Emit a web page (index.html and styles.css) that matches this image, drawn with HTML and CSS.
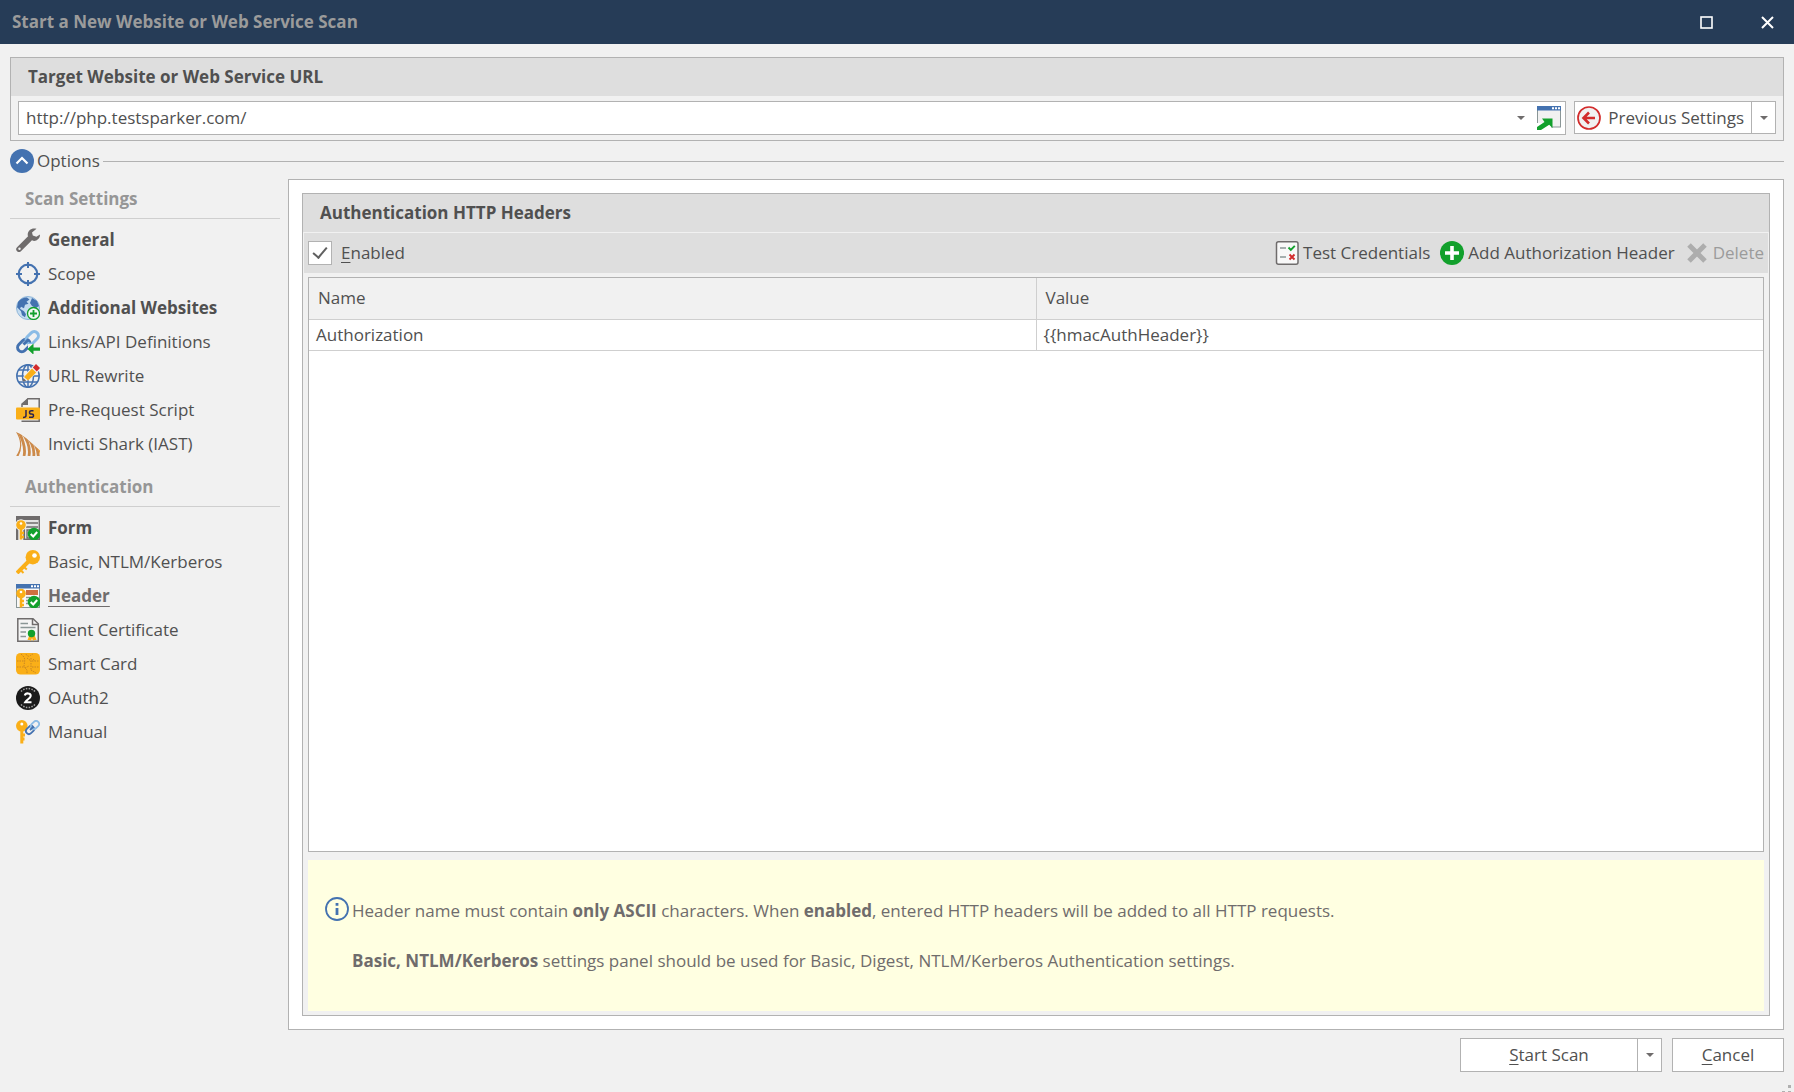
FILE: index.html
```html
<!DOCTYPE html>
<html lang="en">
<head>
    <meta charset="UTF-8">
    <title>Start a New Website or Web Service Scan</title>
    <link rel="stylesheet" href="styles.css">
</head>
<body>
    <header class="titlebar">
        <h1 class="titlebar-title">Start a New Website or Web Service Scan</h1>
        <div class="window-buttons">
            <button class="window-button" aria-label="Maximize">
                <svg width="13" height="13" viewBox="0 0 13 13"><rect x="1" y="1" width="11" height="11" fill="none" stroke="#fff" stroke-width="1.6"/></svg>
            </button>
            <button class="window-button close" aria-label="Close">
                <svg width="13" height="13" viewBox="0 0 13 13"><path d="M1 1l11 11M12 1L1 12" stroke="#fff" stroke-width="2"/></svg>
            </button>
        </div>
    </header>

    <main class="content">
        <section class="target">
            <h2 class="group-title"><label for="targetUrl">Target Website or Web Service URL</label></h2>
            <div class="target-row">
                <div class="url-box">
                    <input type="text" id="targetUrl" class="url-input" value="http://php.testsparker.com/">
                    <button class="arrow-button" aria-label="Recent URLs"><span class="arrow"></span></button>
                    <button class="open-button" aria-label="Open in browser">
                        <svg class="icon" viewBox="0 0 24 24">
                            <rect x=".5" y="1" width="23" height="20" fill="#f1f1f1" stroke="#8a9696"/>
                            <path d="M0 0h24v4.500H0z" fill="#4472b0"/>
                            <path d="M15 1.300h2v2h-2zM18 1.300h2v2h-2zM21 1.300h2v2h-2z" fill="#fff"/>
                            <path d="M0 17h14v7H0z" fill="#fff"/>
                            <path d="M5 12.500h10.500V22l-3.300-3.200L4 24H0v-3l7.500-5z" fill="#12a02c"/>
                        </svg>
                    </button>
                </div>
                <div class="split-button">
                    <button class="split-main previous">
                        <svg class="icon" viewBox="0 0 24 24">
                            <circle cx="12" cy="12" r="11" fill="#f1f1f1" stroke="#d22b2b" stroke-width="1.700"/>
                            <path d="M18 12H7M12 6.500L6.500 12l5.500 5.500" fill="none" stroke="#d22b2b" stroke-width="2.600"/>
                        </svg>
                        Previous Settings
                    </button>
                    <button class="split-arrow" aria-label="More previous settings"><span class="arrow"></span></button>
                </div>
            </div>
        </section>

        <div class="options">
            <button class="options-toggle">
                <svg class="icon" viewBox="0 0 24 24">
                    <circle cx="12" cy="12" r="12" fill="#4472b0"/>
                    <path d="M6.500 14.500L12 9l5.500 5.500" fill="none" stroke="#fff" stroke-width="2.200"/>
                </svg>
                Options
            </button>
            <span class="options-line"></span>
        </div>

        <div class="workspace">
            <nav class="sidebar">
                <h2 class="sidebar-title">Scan Settings</h2>
                <ul class="menu">
                    <li><a href="#general" class="menu-item changed">
                        <svg class="icon" viewBox="0 0 24 24">
                            <path d="M3 21.200L14 10.200" stroke="#6f6c6c" stroke-width="5.500" stroke-linecap="round"/>
                            <path d="M20.500.8C15.500-.8 11 3 11.800 7.800l5 5C20.500 13.500 24 11 24 6.600l-3.600 2.200-3.600-1.200-.8-3.200z" fill="#6f6c6c"/>
                            <circle cx="3.500" cy="20.700" r="1.200" fill="#f1f1f1"/>
                        </svg>
                        General</a></li>
                    <li><a href="#scope" class="menu-item">
                        <svg class="icon" viewBox="0 0 24 24">
                            <circle cx="12" cy="12" r="9.300" fill="none" stroke="#4472b0" stroke-width="2.200"/>
                            <path d="M12 0v6M12 18v6M0 12h6M18 12h6" stroke="#4472b0" stroke-width="2"/>
                        </svg>
                        Scope</a></li>
                    <li><a href="#websites" class="menu-item changed">
                        <svg class="icon" viewBox="0 0 24 24">
                            <circle cx="12" cy="12" r="11.500" fill="#c5dcf0" stroke="#8fb6da"/>
                            <path d="M2 6c2-3 6-4.800 9-4.600l2.500 2-3 2.300 2 2-3.500 1-1 3.500-3-1.500-1 2 4 2.500 2 3-1 3-3-2-1-4-4-4zM16 2l5 3 2 5-3 2-4-2-2-3z" fill="#4472b0"/>
                            <circle cx="17.500" cy="17.500" r="6" fill="#f4f8f4" stroke="#12a02c" stroke-width="1.300"/>
                            <path d="M17.500 14v7M14 17.500h7" stroke="#12a02c" stroke-width="1.800"/>
                        </svg>
                        Additional Websites</a></li>
                    <li><a href="#links" class="menu-item">
                        <svg class="icon" viewBox="0 0 24 24">
                            <rect x="-7" y="-4.200" width="14" height="8.400" rx="4.200" transform="translate(7.800 15.500) rotate(-45)" fill="none" stroke="#4472b0" stroke-width="3"/>
                            <rect x="-7" y="-4.200" width="14" height="8.400" rx="4.200" transform="translate(16.200 7.800) rotate(-45)" fill="none" stroke="#8bbce6" stroke-width="3"/>
                            <path d="M7.500 14.500l5-5" stroke="#4472b0" stroke-width="3"/>
                            <path d="M12 14h12v10H12z" fill="#f1f1f1"/>
                            <path d="M11.500 19l6-5.500v4H24v3.200h-6.500v4z" fill="#12a02c"/>
                        </svg>
                        Links/API Definitions</a></li>
                    <li><a href="#rewrite" class="menu-item">
                        <svg class="icon" viewBox="0 0 24 24">
                            <g fill="none" stroke="#4472b0" stroke-width="1.500">
                                <circle cx="12" cy="12" r="11.200"/>
                                <ellipse cx="12" cy="12" rx="5.500" ry="11.200"/>
                                <path d="M12 1v22M1 12h22M3 6h18M3 18h18"/>
                            </g>
                            <path d="M6.500 17.500l1.500-6L18 1l6 5-11 10z" fill="#f1f1f1"/>
                            <path d="M8 13l8-8.500 4.200 4L12 16.500z" fill="#faaf18"/>
                            <path d="M16.800 3.500L20 0l4 4-3.200 3.500z" fill="#d22b2b"/>
                            <path d="M7.300 14l3 2.800L6.500 17.500z" fill="#6f6c6c"/>
                        </svg>
                        URL Rewrite</a></li>
                    <li><a href="#script" class="menu-item">
                        <svg class="icon" viewBox="0 0 24 24">
                            <path d="M6 9V6l6-5.200h11.200V23.300H5.500" fill="#f1f1f1" stroke="#6f6c6c" stroke-width="1.500"/>
                            <path d="M5.500 7L12 0v7z" fill="#6f6c6c"/>
                            <rect y="9.500" width="24" height="12" rx="1" fill="#faaf18"/>
                            <path d="M10 12v5.500q0 2-3 2M17.500 12.800h-2q-2 0-2 1.600t2 1.600 2 1.700-2 1.600h-2.500" fill="none" stroke="#2b2350" stroke-width="1.500"/>
                        </svg>
                        Pre-Request Script</a></li>
                    <li><a href="#shark" class="menu-item">
                        <svg class="icon" viewBox="0 0 24 24">
                            <clipPath id="fin"><path d="M0 0C8 3 13 9 24 18.500V24H0C6 16 5 8 0 0z"/></clipPath>
                            <g clip-path="url(#fin)" fill="none" stroke="#cc8a4a" stroke-width="2.800">
                                <path d="M0 0C4 7 6 15 1 24"/>
                                <path d="M3 0c4 8 7 16 5 24"/>
                                <path d="M6.500 1c5 7 8 15 6.500 23"/>
                                <path d="M9.500 3c6 6 9 13 8.300 21"/>
                                <path d="M14 6c5 5 8 11 8.300 18"/>
                                <path d="M19 11c4 4 6 9 7 13" stroke="#f2a23a"/>
                            </g>
                        </svg>
                        Invicti Shark (IAST)</a></li>
                </ul>

                <h2 class="sidebar-title">Authentication</h2>
                <ul class="menu">
                    <li><a href="#form" class="menu-item changed">
                        <svg class="icon" viewBox="0 0 24 24">
                            <rect x=".7" y=".7" width="22.600" height="22.600" fill="#e4e4e4" stroke="#6f6c6c" stroke-width="1.400"/>
                            <path d="M0 0h24v4H0zM0 12h9v12H0z" fill="#6f6c6c"/>
                            <path d="M10 7h12M10 11h12M11 14h5v8h-5z" stroke="#6f6c6c" stroke-width="1.300" fill="none"/>
                            <path d="M4.800 12V24" stroke="#f1f1f1" stroke-width="5"/>
                            <circle cx="5" cy="9" r="5.700" fill="#f1f1f1"/>
                            <circle cx="5" cy="9" r="4.800" fill="#faaf18"/>
                            <circle cx="5" cy="7.500" r="1.300" fill="#fff"/>
                            <path d="M5 12v11.500M5 17h3M5 21h3" stroke="#faaf18" stroke-width="2.500"/>
                            <circle cx="18" cy="18" r="6.300" fill="#12a02c"/>
                            <path d="M14.700 18l2.500 2.500 4-4.500" stroke="#fff" stroke-width="2" fill="none"/>
                        </svg>
                        Form</a></li>
                    <li><a href="#basic" class="menu-item">
                        <svg class="icon" viewBox="0 0 24 24">
                            <circle cx="16.800" cy="7.200" r="7.200" fill="#faaf18"/>
                            <path d="M12.500 11.500L1 23" stroke="#faaf18" stroke-width="4"/>
                            <path d="M3.500 19l4 4M6.800 16l4 3.500" stroke="#faaf18" stroke-width="2"/>
                            <circle cx="18.500" cy="5.500" r="2.300" fill="#fff"/>
                        </svg>
                        Basic, NTLM/Kerberos</a></li>
                    <li><a href="#header" class="menu-item selected" aria-current="page">
                        <svg class="icon" viewBox="0 0 24 24">
                            <rect x=".5" y=".5" width="23" height="23" fill="#f8f8f8" stroke="#8a9696"/>
                            <path d="M0 0h24v4.500H0z" fill="#4472b0"/>
                            <path d="M15 1.300h2v2h-2zM18 1.300h2v2h-2zM21 1.300h2v2h-2z" fill="#fff"/>
                            <path d="M10 6h12v5H10z" fill="#cf7040"/>
                            <path d="M10 13.500h4M10 16.500h3M10 19.500h3" stroke="#8a9696" stroke-width="1.400"/>
                            <circle cx="5" cy="9.500" r="4.800" fill="#faaf18"/>
                            <circle cx="5" cy="8" r="1.300" fill="#fff"/>
                            <path d="M5 12v11.500M5 17h3M5 21h3" stroke="#faaf18" stroke-width="2.500"/>
                            <circle cx="18" cy="18" r="6.300" fill="#12a02c"/>
                            <path d="M14.700 18l2.500 2.500 4-4.500" stroke="#fff" stroke-width="2" fill="none"/>
                        </svg>
                        Header</a></li>
                    <li><a href="#certificate" class="menu-item">
                        <svg class="icon" viewBox="0 0 24 24">
                            <path d="M1.800.8H17l5.300 5v17.500H1.800z" fill="#f4f4f4" stroke="#6f6c6c" stroke-width="1.500"/>
                            <path d="M16.500 1v5.500H22" fill="none" stroke="#6f6c6c" stroke-width="1.500"/>
                            <path d="M4.500 5.500H12M4.500 9.500h15M4.500 14H10M4.500 18.500H10" stroke="#8a9696" stroke-width="1.400"/>
                            <path d="M13.500 17l-2 5h2.500l1 1 1-3 1 3 1-1H20.500l-2-5z" fill="#faaf18"/>
                            <circle cx="15.500" cy="15.500" r="3.700" fill="#12a02c"/>
                        </svg>
                        Client Certificate</a></li>
                    <li><a href="#smartcard" class="menu-item">
                        <svg class="icon" viewBox="0 0 24 24">
                            <rect y="1" width="24" height="21.500" rx="4.500" fill="#faaf18"/>
                            <path d="M1 9h7M1 15h7M16 9h7M16 15h7M5 2c6 5 3 7 3 13l3 3v4M10 2q2 4 5 1l2-1M15 6v12M11 6l4 3M9 16l4-2M15 18l5 3M17 7l2 2" fill="none" stroke="#c98722" stroke-dasharray="1.500 1"/>
                        </svg>
                        Smart Card</a></li>
                    <li><a href="#oauth2" class="menu-item">
                        <svg class="icon" viewBox="0 0 24 24">
                            <circle cx="12" cy="12" r="12" fill="#1a1a1a"/>
                            <path d="M5 5.500C9 1.500 15 1.500 19 5.500M5 18.500c4 4 10 4 14 0" fill="none" stroke="#a5a5a5" stroke-width="1.500" stroke-dasharray="1.500 1.300"/>
                            <path d="M8.800 9.600C9.500 6.500 15 6.800 14.700 10c-.2 2.500-4 3.500-5.500 6.300h6.300" fill="none" stroke="#fff" stroke-width="2.100"/>
                        </svg>
                        OAuth2</a></li>
                    <li><a href="#manual" class="menu-item">
                        <svg class="icon" viewBox="0 0 24 24">
                            <circle cx="5.800" cy="5.800" r="5.800" fill="#faaf18"/>
                            <circle cx="5.800" cy="4" r="1.500" fill="#fff"/>
                            <path d="M5.800 10v13.500M6 15h3M6 19h2.500" stroke="#faaf18" stroke-width="3"/>
                            <rect x="-4.500" y="-3" width="9" height="6" rx="3" transform="translate(14 10) rotate(-45)" fill="#f1f1f1" stroke="#4472b0" stroke-width="1.800"/>
                            <rect x="-4.500" y="-3" width="9" height="6" rx="3" transform="translate(19 5) rotate(-45)" fill="none" stroke="#8bbce6" stroke-width="1.800"/>
                            <path d="M14 10l3-3" stroke="#4472b0" stroke-width="1.800"/>
                        </svg>
                        Manual</a></li>
                </ul>
            </nav>

            <div class="page">
                <section class="headers">
                    <h2 class="group-title">Authentication HTTP Headers</h2>
                    <div class="toolbar">
                        <input type="checkbox" id="enabled" class="checkbox" checked>
                        <label for="enabled" class="toolbar-label"><u>E</u>nabled</label>
                        <button class="tool">
                            <svg class="icon" viewBox="0 0 24 24">
                                <rect x="1.500" y=".8" width="21.500" height="22.400" rx="2" fill="#f8f8f8" stroke="#6f6c6c" stroke-width="1.500"/>
                                <path d="M5 7h6M5 16h6" stroke="#8a9696" stroke-width="1.500"/>
                                <path d="M13.500 6.500l2.300 2.300 4-4" stroke="#12a02c" stroke-width="1.900" fill="none"/>
                                <path d="M14.500 13.500l5 5M19.500 13.500l-5 5" stroke="#d22b2b" stroke-width="1.900"/>
                            </svg>
                            Test Credentials
                        </button>
                        <button class="tool">
                            <svg class="icon" viewBox="0 0 24 24">
                                <circle cx="12" cy="12" r="12" fill="#12a02c"/>
                                <path d="M12 5v14M5 12h14" stroke="#fff" stroke-width="3.600"/>
                            </svg>
                            Add Authorization Header
                        </button>
                        <button class="tool" disabled>
                            <svg class="icon" viewBox="0 0 24 24">
                                <path d="M4 4l16 16M20 4L4 20" stroke="#adadad" stroke-width="5"/>
                            </svg>
                            Delete
                        </button>
                    </div>
                    <div class="grid">
                        <table class="grid-table">
                            <thead>
                                <tr><th>Name</th><th>Value</th></tr>
                            </thead>
                            <tbody>
                                <tr><td>Authorization</td><td>{{hmacAuthHeader}}</td></tr>
                            </tbody>
                        </table>
                    </div>
                    <div class="notice">
                        <svg class="icon" viewBox="0 0 24 24">
                            <circle cx="12" cy="12" r="11" fill="none" stroke="#4472b0" stroke-width="1.800"/>
                            <path d="M12 11v7M12 6v2.800" stroke="#4472b0" stroke-width="2.800"/>
                        </svg>
                        <div class="notice-text">
                            <p>Header name must contain <b>only ASCII</b> characters. When <b>enabled</b>, entered HTTP headers will be added to all HTTP requests.</p>
                            <p><b>Basic, NTLM/Kerberos</b> settings panel should be used for Basic, Digest, NTLM/Kerberos Authentication settings.</p>
                        </div>
                    </div>
                </section>
            </div>
        </div>
    </main>

    <footer class="footer">
        <div class="split-button">
            <button class="split-main start"><span><u>S</u>tart Scan</span></button>
            <button class="split-arrow" aria-label="More scan options"><span class="arrow"></span></button>
        </div>
        <button class="cancel"><u>C</u>ancel</button>
    </footer>
    <svg class="grip" width="10" height="10" viewBox="0 0 10 10"><path d="M6 3h3v3H6zM0 9h3v1H0zM6 9h3v1H6z" fill="#b0b0b0"/></svg>
</body>
</html>
```
FILE: styles.css
```css
* {
    box-sizing: border-box;
}

body {
    margin: 0;
    min-height: 100vh;
    display: flex;
    flex-direction: column;
    background-color: #f1f1f1;
    color: #505050;
    font-family: "Open Sans", "Noto Sans", sans-serif;
    font-size: 17px;
    line-height: 24px;
}

h1, h2, p, ul {
    margin: 0;
    padding: 0;
    font-size: inherit;
}

button, input {
    font: inherit;
    color: inherit;
    margin: 0;
    padding: 0;
    border: none;
    background: none;
}

button {
    display: flex;
    align-items: center;
    justify-content: center;
    white-space: nowrap;
}

b, h1, h2, .changed, .selected {
    font-weight: 700;
}

u {
    text-underline-offset: 3px;
}

.icon {
    width: 24px;
    height: 24px;
    flex: none;
}

/* small drop-down triangle */
.arrow {
    border: 4px solid transparent;
    border-top-color: #6f6c6c;
    border-bottom: none;
}

/* Title bar */
.titlebar {
    height: 44px;
    padding-left: 12px;
    display: flex;
    align-items: center;
    justify-content: space-between;
    background-color: #263c57;
}

.titlebar-title {
    color: #9b9b9b;
}

.window-buttons {
    display: flex;
}

.window-button {
    width: 68px;
    height: 43px;
}

.close {
    width: 54px;
}

.content {
    flex: 1;
    display: flex;
    flex-direction: column;
    padding: 13px 10px 0;
}

.group-title {
    height: 38px;
    padding-left: 17px;
    line-height: 38px;
    background-color: #dedede;
}

/* Target URL */
.target {
    border: 1px solid #b2b2b2;
}

.target-row {
    display: flex;
    align-items: flex-start;
    gap: 8px;
    padding: 5px 7px;
}

.url-box {
    flex: 1;
    display: flex;
    height: 34px;
    border: 1px solid #b2b2b2;
    background-color: #fff;
}

.url-input {
    flex: 1;
    padding: 0 7px;
    outline: none;
}

.arrow-button {
    width: 24px;
}

.open-button {
    width: 32px;
}

.split-button {
    display: flex;
    height: 33px;
    border: 1px solid #b2b2b2;
    background-color: #fff;
}

.split-arrow {
    width: 24px;
    border-left: 1px solid #b2b2b2;
}

.previous {
    gap: 7px;
    padding: 0 7px 0 2px;
}

/* Options */
.options {
    display: flex;
    align-items: center;
    height: 38px;
    padding-top: 2px;
}

.options-toggle {
    gap: 3px;
}

.options-line {
    flex: 1;
    height: 1px;
    margin-left: 3px;
    background-color: #b2b2b2;
}

.workspace {
    flex: 1;
    display: flex;
    gap: 8px;
}

/* Sidebar */
.sidebar {
    width: 270px;
    flex: none;
}

.sidebar-title {
    height: 40px;
    padding: 8px 15px 0;
    border-bottom: 1px solid #cfcfcf;
    color: #969696;
}

.menu {
    list-style: none;
    padding: 4px 0 6px;
}

.menu-item {
    display: flex;
    align-items: center;
    gap: 8px;
    height: 34px;
    padding-left: 6px;
    color: inherit;
    text-decoration: none;
}

.selected {
    color: #6f6c6c;
    text-decoration: underline;
    text-decoration-thickness: 1px;
    text-underline-offset: 4px;
}

/* Page */
.page {
    flex: 1;
    display: flex;
    padding: 13px;
    border: 1px solid #b2b2b2;
    background-color: #fff;
}

.headers {
    flex: 1;
    display: flex;
    flex-direction: column;
    border: 1px solid #b2b2b2;
    background-color: #f1f1f1;
}

.toolbar {
    display: flex;
    align-items: center;
    height: 40px;
    margin: 1px 1px 0;
    padding: 0 4px;
    background-color: #dedede;
}

.checkbox {
    appearance: none;
    display: grid;
    place-items: center;
    width: 24px;
    height: 24px;
    border: 1px solid #b2b2b2;
    background-color: #fff;
}

.checkbox:checked::before {
    content: "";
    width: 6px;
    height: 12px;
    border: solid #606060;
    border-width: 0 2px 2px 0;
    transform: translateY(-2px) rotate(40deg);
}

.toolbar-label {
    margin: 0 auto 0 9px;
}

.tool {
    gap: 4px;
    margin-left: 10px;
}

.tool:disabled {
    color: #9b9b9b;
}

.grid {
    flex: 1;
    margin: 4px 5px 8px;
    border: 1px solid #b2b2b2;
    background-color: #fff;
}

.grid-table {
    width: 100%;
    table-layout: fixed;
    border-collapse: collapse;
}

.grid-table th,
.grid-table td {
    height: 31px;
    padding: 0 7px;
    border-bottom: 1px solid #cfcfcf;
    text-align: left;
    font-weight: normal;
}

.grid-table th {
    height: 41px;
    padding: 0 9px;
    background-color: #f1f1f1;
}

.grid-table th + th,
.grid-table td + td {
    border-left: 1px solid #cfcfcf;
}

.notice {
    display: flex;
    gap: 3px;
    margin: 0 5px 4px;
    padding: 37px 17px;
    background-color: #ffffe1;
    color: #6f6c6c;
}

.notice-text {
    display: flex;
    flex-direction: column;
    gap: 26px;
    padding: 2px 0 1px;
}

/* Footer */
.footer {
    display: flex;
    justify-content: flex-end;
    gap: 10px;
    padding: 8px 10px 20px;
}

.footer .split-button,
.cancel {
    height: 34px;
}

.start {
    width: 176px;
}

.cancel {
    width: 112px;
    border: 1px solid #b2b2b2;
    background-color: #fff;
}

.grip {
    position: absolute;
    right: 2px;
    bottom: 0;
}
```
